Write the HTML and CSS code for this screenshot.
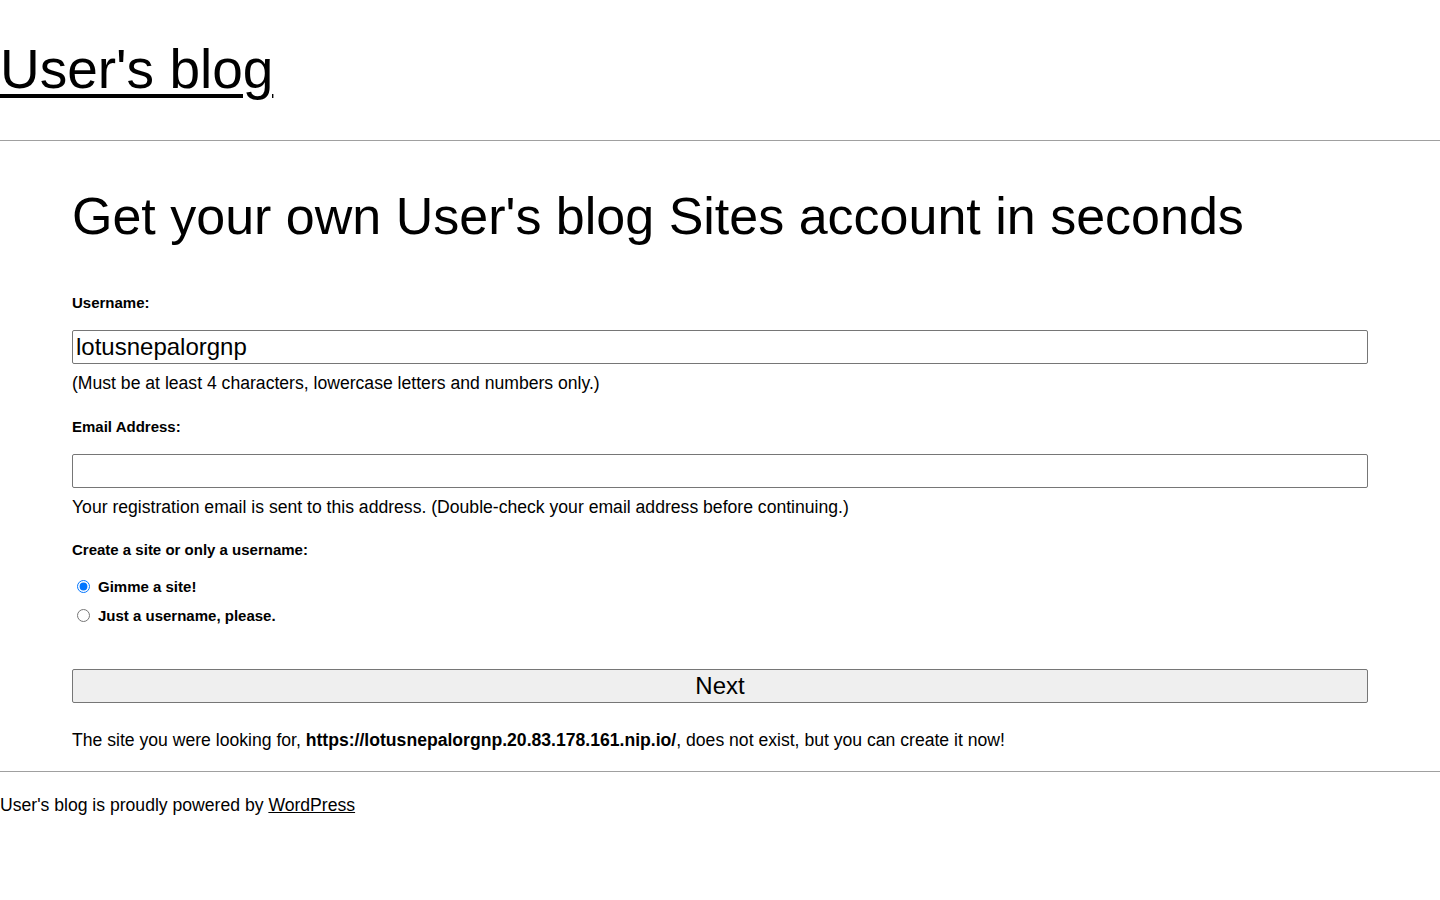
FILE: index.html
```html
<!DOCTYPE html>
<html lang="en">
<head>
<meta charset="utf-8">
<title>User's blog</title>
<link rel="stylesheet" href="styles.css">
</head>
<body>
<header class="site-header">
  <a class="site-title" href="#">User's blog</a>
</header>
<main class="signup">
  <h2 class="signup-title">Get your own User's blog Sites account in seconds</h2>
  <form class="signup-form">
    <label class="field-label" for="user_name">Username:</label>
    <input class="text-input" id="user_name" type="text" value="lotusnepalorgnp">
    <p class="hint">(Must be at least 4 characters, lowercase letters and numbers only.)</p>

    <label class="field-label email-label" for="user_email">Email Address:</label>
    <input class="text-input" id="user_email" type="email" value="">
    <p class="hint">Your registration email is sent to this address. (Double-check your email address before continuing.)</p>

    <p class="field-label choice-label">Create a site or only a username:</p>
    <div class="choices">
      <label class="choice"><input type="radio" name="signup_for" checked> <span>Gimme a site!</span></label>
      <label class="choice"><input type="radio" name="signup_for"> <span>Just a username, please.</span></label>
    </div>

    <button class="next-btn" type="button">Next</button>
  </form>
  <p class="notice">The site you were looking for, <strong>https://lotusnepalorgnp.20.83.178.161.nip.io/</strong>, does not exist, but you can create it now!</p>
</main>
<footer class="site-footer">
  <p>User's blog is proudly powered by <a href="#">WordPress</a></p>
</footer>
</body>
</html>
```

FILE: styles.css
```css
html, body {
  margin: 0;
  padding: 0;
  background: #fff;
  color: #000;
  font-family: "Liberation Sans", Arial, sans-serif;
}

a { color: #000; }

.site-header {
  height: 141px;
  box-sizing: border-box;
  padding-top: 38px;
  border-bottom: 1px solid #a0a0a0;
}

.site-title {
  font-size: 55px;
  line-height: 63px;
  text-decoration-thickness: 4px;
  text-underline-offset: 6px;
}

.signup {
  padding: 0 72px;
}

.signup-title {
  margin: 44px 0 0;
  font-size: 52px;
  font-weight: 400;
  line-height: 63px;
}

.signup-form {
  display: flex;
  flex-direction: column;
  align-items: stretch;
  margin-top: 46px;
}

.field-label {
  display: block;
  margin: 0;
  font-size: 15px;
  font-weight: 700;
  line-height: 17px;
}

.email-label { margin-top: 24px; }
.choice-label { margin-top: 23px; }

.text-input {
  margin-top: 19px;
  box-sizing: border-box;
  height: 34px;
  padding: 2px 3px;
  border: 1px solid #767676;
  border-radius: 2px;
  font-family: "Liberation Sans", Arial, sans-serif;
  font-size: 24px;
  color: #000;
}

.hint {
  margin: 9px 0 0;
  font-size: 17.6px;
  line-height: 21px;
}

.choices {
  display: flex;
  flex-direction: column;
  gap: 12px;
  margin-top: 20px;
}

.choice {
  display: flex;
  align-items: center;
  gap: 5px;
  font-size: 15px;
  font-weight: 700;
  line-height: 17px;
}

.choice input {
  margin: 0 3px 0 5px;
  width: 13px;
  height: 13px;
}

.next-btn {
  margin-top: 45px;
  height: 34px;
  box-sizing: border-box;
  border: 1px solid #767676;
  border-radius: 2px;
  background: #efefef;
  font-family: "Liberation Sans", Arial, sans-serif;
  font-size: 24px;
  color: #000;
}

.notice {
  margin: 27px 0 0;
  padding-bottom: 20px;
  font-size: 17.6px;
  line-height: 21px;
}

.site-footer {
  border-top: 1px solid #a0a0a0;
}

.site-footer p {
  margin: 23px 0 0;
  font-size: 17.6px;
  line-height: 21px;
}
```
